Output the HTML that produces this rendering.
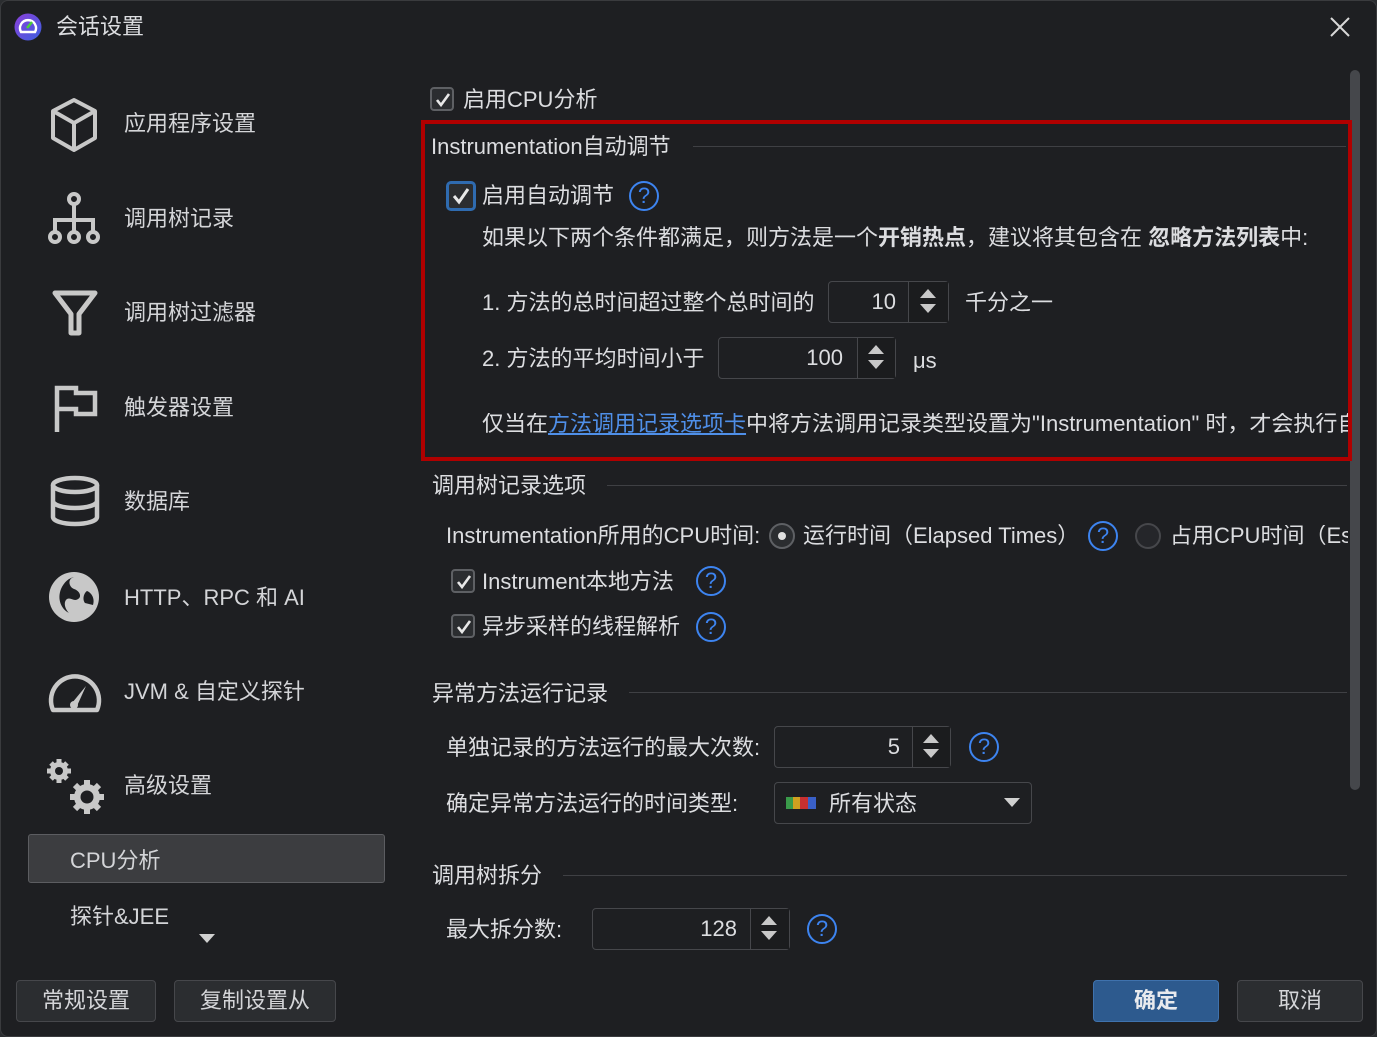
<!DOCTYPE html>
<html><head><meta charset="utf-8">
<style>
*{box-sizing:border-box;margin:0;padding:0}
body{width:1377px;height:1037px;background:#2b2d30;overflow:hidden;font-family:"Liberation Sans","Noto Sans CJK SC",sans-serif;color:#dcdde0;font-size:22px}
#win{position:absolute;left:0px;top:0px;width:1377px;height:1037px;background:#1e1f22;border:1px solid #3a3b3e;border-radius:8px}
.a{position:absolute;white-space:nowrap;line-height:1}
.side{font-size:22px;color:#d4d5d8}
.ic{position:absolute}
.cb{position:absolute;width:24px;height:24px;border:2px solid #5e6064;border-radius:4px;background:#2b2d30}
.cb svg{position:absolute;left:2px;top:2px}
.hp{position:absolute;width:30px;height:30px;border:2.5px solid #3d84f0;border-radius:50%;color:#3d84f0;font-size:22px;text-align:center;line-height:25px}
.sep{position:absolute;height:1px;background:#3f4044}
.spin{position:absolute;border:1.5px solid #46474b;border-radius:4px;background:#1e1f22}
.spin .v{position:absolute;right:0;top:0;bottom:0;border-left:1.5px solid #46474b;background:#1b1c1e}
.spin .n{position:absolute;top:50%;transform:translateY(-50%);text-align:right}
.btn{position:absolute;border:1.5px solid #46474b;border-radius:4px;background:#2b2d30;text-align:center;font-size:22px;color:#d4d5d8}
</style></head><body>
<div id="win">
<svg class="ic" style="left:13px;top:12px" width="28" height="28" viewBox="0 0 28 28"><defs><linearGradient id="g" x1="0" y1="0" x2="1" y2="1"><stop offset="0" stop-color="#8b3fd9"/><stop offset="1" stop-color="#3b5fe0"/></linearGradient></defs><circle cx="14" cy="14" r="13.5" fill="url(#g)"/><path d="M7 19a8 8 0 1 1 14 0z" fill="none" stroke="#fff" stroke-width="2.4"/><path d="M13 15l5-6" stroke="#4ccf3a" stroke-width="2.5"/></svg>
<div class="a" style="left:55px;top:15px;font-size:22px;color:#dcdde0">会话设置</div>
<svg class="ic" style="left:1328px;top:15px" width="22" height="22" viewBox="0 0 22 22"><path d="M2 2L20 20M20 2L2 20" stroke="#d8d8d8" stroke-width="2"/></svg>

<svg class="ic" style="left:48px;top:96px" width="50" height="56" viewBox="0 0 50 56"><path d="M25 3L46 14V41L25 53L4 41V14Z M4 14L25 26L46 14 M25 26V53" fill="none" stroke="#c8c8c8" stroke-width="4" stroke-linejoin="round"/></svg>
<div class="a side" style="left:123px;top:112px">应用程序设置</div>
<svg class="ic" style="left:46px;top:190px" width="56" height="56" viewBox="0 0 56 56"><g fill="none" stroke="#c8c8c8" stroke-width="4"><circle cx="27" cy="8" r="5"/><path d="M27 13V29M8 42V29H46V42M27 29V42"/><circle cx="8" cy="46" r="5"/><circle cx="27" cy="46" r="5"/><circle cx="46" cy="46" r="5"/></g></svg>
<div class="a side" style="left:123px;top:207px">调用树记录</div>
<svg class="ic" style="left:51px;top:289px" width="46" height="46" viewBox="0 0 46 46"><path d="M3 3H43L27 24V43H19V24Z" fill="none" stroke="#c8c8c8" stroke-width="5" stroke-linejoin="round"/></svg>
<div class="a side" style="left:123px;top:301px">调用树过滤器</div>
<svg class="ic" style="left:53px;top:384px" width="44" height="48" viewBox="0 0 44 48"><path d="M3 47V3H22V8H41V29H22V24H3" fill="none" stroke="#c8c8c8" stroke-width="4.5"/></svg>
<div class="a side" style="left:123px;top:396px">触发器设置</div>
<svg class="ic" style="left:48px;top:474px" width="52" height="52" viewBox="0 0 52 52"><g fill="none" stroke="#c8c8c8" stroke-width="4.5"><ellipse cx="26" cy="10" rx="22" ry="7"/><path d="M4 10V42C4 46 14 49 26 49S48 46 48 42V10M4 26C4 30 14 33 26 33S48 30 48 26"/></g></svg>
<div class="a side" style="left:123px;top:490px">数据库</div>
<svg class="ic" style="left:46px;top:568px" width="56" height="56" viewBox="0 0 56 56"><circle cx="27" cy="28" r="25" fill="#c8c8c8"/><path d="M27 8C20 10 22 18 27 20C33 22 35 28 31 30C27 33 24 28 20 30C16 33 18 40 22 44C14 40 10 30 14 20C17 13 22 9 27 8Z M40 22C45 24 48 30 46 36L38 34C35 30 37 24 40 22Z" fill="#1e1f22"/></svg>
<div class="a side" style="left:123px;top:586px">HTTP、RPC 和 AI</div>
<svg class="ic" style="left:47px;top:669px" width="54" height="44" viewBox="0 0 54 44"><path d="M5 40A24 24 0 1 1 49 40Z" fill="none" stroke="#c8c8c8" stroke-width="4.5" stroke-linejoin="round"/><path d="M24 33L38 16L29 36Z" fill="#c8c8c8"/><circle cx="26" cy="35" r="4" fill="#c8c8c8"/></svg>
<div class="a side" style="left:123px;top:680px">JVM &amp; 自定义探针</div>
<svg class="ic" style="left:46px;top:757px" width="58" height="58" viewBox="0 0 58 58"><g fill="#c8c8c8"><circle cx="12" cy="13" r="9"/><circle cx="40" cy="39" r="13"/></g><g stroke="#c8c8c8" stroke-width="5"><path d="M12 1V25M0 13H24M4 5L20 21M20 5L4 21"/><path d="M40 22V56M23 39H57M28 27L52 51M52 27L28 51" stroke-width="6"/></g><circle cx="12" cy="13" r="4" fill="#1e1f22"/><circle cx="40" cy="39" r="6.5" fill="#1e1f22"/></svg>
<div class="a side" style="left:123px;top:774px">高级设置</div>
<div style="position:absolute;left:27px;top:833px;width:357px;height:49px;background:#3c3d40;border:1.5px solid #5c5d61;border-radius:3px"></div>
<div class="a side" style="left:69px;top:849px">CPU分析</div>
<div class="a side" style="left:69px;top:905px">探针&amp;JEE</div>
<svg class="ic" style="left:198px;top:933px" width="16" height="10"><path d="M0 0H16L8 9Z" fill="#d0d0d0"/></svg>

<div class="btn" style="left:15px;top:979px;width:140px;height:42px;line-height:40px">常规设置</div>
<div class="btn" style="left:173px;top:979px;width:162px;height:42px;line-height:40px">复制设置从</div>
<div class="btn" style="left:1092px;top:979px;width:126px;height:42px;line-height:40px;background:#2d5a8e;border-color:#3f72ad;color:#e8eaee;font-weight:bold">确定</div>
<div class="btn" style="left:1236px;top:979px;width:126px;height:42px;line-height:40px">取消</div>

<div style="position:absolute;left:1349px;top:69px;width:10px;height:720px;background:#45474b;border-radius:5px"></div>

<div class="cb" style="left:429px;top:86px"><svg width="18" height="18"><path d="M3 9L7 14L15 3" fill="none" stroke="#e8e8e8" stroke-width="2.6"/></svg></div>
<div class="a" style="left:462px;top:88px">启用CPU分析</div>

<div style="position:absolute;left:420px;top:119px;width:931px;height:341px;border:4px solid #b00000"></div>
<div class="a" style="left:430px;top:135px">Instrumentation自动调节</div>
<div class="sep" style="left:692px;top:145px;width:653px"></div>
<div class="cb" style="left:445px;top:180px;width:30px;height:30px;border:3px solid #2f6bb0;border-radius:5px;background:#2b2d30"><svg width="22" height="22" style="left:1px;top:1px"><path d="M4 11L9 17L18 4" fill="none" stroke="#e8e8e8" stroke-width="3"/></svg></div>
<div class="a" style="left:481px;top:184px">启用自动调节</div>
<div class="hp" style="left:628px;top:180px">?</div>
<div class="a" style="left:481px;top:226px">如果以下两个条件都满足，则方法是一个<b>开销热点</b>，建议将其包含在 <b>忽略方法列表</b>中:</div>
<div class="a" style="left:481px;top:291px">1. 方法的总时间超过整个总时间的</div>
<div class="spin" style="left:827px;top:280px;width:121px;height:42px"><div class="n" style="right:52px">10</div><div class="v" style="width:40px"><svg width="38" height="38"><path d="M11 16L19 7L27 16Z M11 22L19 31L27 22Z" fill="#c8c8c8"/></svg></div></div>
<div class="a" style="left:964px;top:291px">千分之一</div>
<div class="a" style="left:481px;top:347px">2. 方法的平均时间小于</div>
<div class="spin" style="left:717px;top:336px;width:178px;height:42px"><div class="n" style="right:52px">100</div><div class="v" style="width:38px"><svg width="36" height="38"><path d="M10 16L18 7L26 16Z M10 22L18 31L26 22Z" fill="#c8c8c8"/></svg></div></div>
<div class="a" style="left:912px;top:349px">μs</div>
<div class="a" style="left:481px;top:412px;width:866px;overflow:hidden">仅当在<span style="color:#4f8fe8;text-decoration:underline">方法调用记录选项卡</span>中将方法调用记录类型设置为"Instrumentation" 时，才会执行自动调节</div>

<div class="a" style="left:431px;top:474px">调用树记录选项</div>
<div class="sep" style="left:606px;top:484px;width:740px"></div>
<div class="a" style="left:445px;top:524px">Instrumentation所用的CPU时间:</div>
<div style="position:absolute;left:768px;top:522px;width:26px;height:26px;border:2px solid #5e6064;border-radius:50%;background:#2b2d30"><div style="position:absolute;left:7px;top:7px;width:8px;height:8px;border-radius:50%;background:#e0e0e0"></div></div>
<div class="a" style="left:802px;top:524px">运行时间（Elapsed Times）</div>
<div class="hp" style="left:1087px;top:520px">?</div>
<div style="position:absolute;left:1134px;top:522px;width:26px;height:26px;border:2px solid #46474b;border-radius:50%;background:#25262a"></div>
<div class="a" style="left:1169px;top:524px;width:178px;overflow:hidden">占用CPU时间（Estimated）</div>
<div class="cb" style="left:450px;top:568px"><svg width="18" height="18"><path d="M3 9L7 14L15 3" fill="none" stroke="#e8e8e8" stroke-width="2.6"/></svg></div>
<div class="a" style="left:481px;top:570px">Instrument本地方法</div>
<div class="hp" style="left:695px;top:565px">?</div>
<div class="cb" style="left:450px;top:613px"><svg width="18" height="18"><path d="M3 9L7 14L15 3" fill="none" stroke="#e8e8e8" stroke-width="2.6"/></svg></div>
<div class="a" style="left:481px;top:615px">异步采样的线程解析</div>
<div class="hp" style="left:695px;top:611px">?</div>

<div class="a" style="left:431px;top:682px">异常方法运行记录</div>
<div class="sep" style="left:628px;top:691px;width:718px"></div>
<div class="a" style="left:445px;top:736px">单独记录的方法运行的最大次数:</div>
<div class="spin" style="left:773px;top:725px;width:177px;height:42px"><div class="n" style="right:50px">5</div><div class="v" style="width:38px"><svg width="36" height="38"><path d="M10 16L18 7L26 16Z M10 22L18 31L26 22Z" fill="#c8c8c8"/></svg></div></div>
<div class="hp" style="left:968px;top:731px">?</div>
<div class="a" style="left:445px;top:792px">确定异常方法运行的时间类型:</div>
<div class="spin" style="left:773px;top:781px;width:258px;height:42px"></div>
<svg class="ic" style="left:785px;top:796px" width="30" height="12"><rect width="7" height="12" fill="#3a9a4a"/><rect x="7" width="7" height="12" fill="#d0a020"/><rect x="14" width="8" height="12" fill="#c83030"/><rect x="22" width="8" height="12" fill="#3a60c8"/></svg>
<div class="a" style="left:828px;top:792px">所有状态</div>
<svg class="ic" style="left:1003px;top:797px" width="16" height="10"><path d="M0 0H16L8 9Z" fill="#d0d0d0"/></svg>

<div class="a" style="left:431px;top:864px">调用树拆分</div>
<div class="sep" style="left:562px;top:874px;width:784px"></div>
<div class="a" style="left:445px;top:918px">最大拆分数:</div>
<div class="spin" style="left:591px;top:907px;width:198px;height:42px"><div class="n" style="right:52px">128</div><div class="v" style="width:39px"><svg width="36" height="38"><path d="M10 16L18 7L26 16Z M10 22L18 31L26 22Z" fill="#c8c8c8"/></svg></div></div>
<div class="hp" style="left:806px;top:913px">?</div>
</div>
</body></html>
